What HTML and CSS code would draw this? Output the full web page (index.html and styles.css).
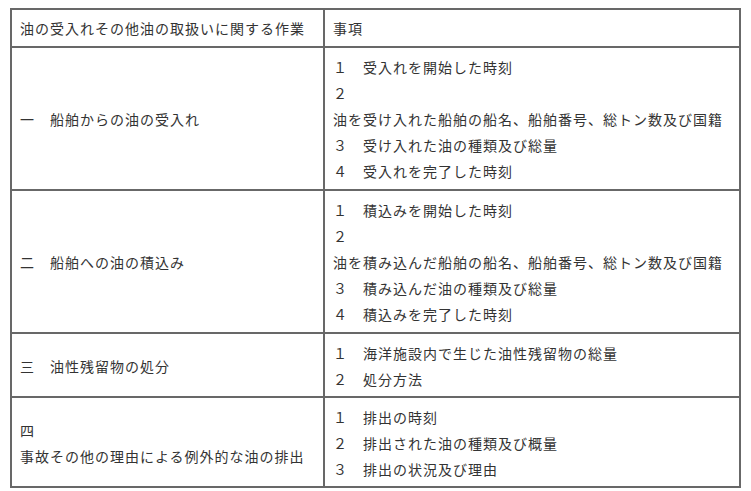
FILE: index.html
```html
<!DOCTYPE html>
<html lang="ja">
<head>
<meta charset="utf-8">
<title>油の取扱いに関する作業</title>
<link rel="stylesheet" href="styles.css">
</head>
<body>
<table class="record">
  <thead>
    <tr>
      <th class="work">油の受入れその他油の取扱いに関する作業</th>
      <th class="items">事項</th>
    </tr>
  </thead>
  <tbody>
    <tr>
      <td class="work"><p class="item"><span class="num">一　</span><span class="txt">船舶からの油の受入れ</span></p></td>
      <td class="items">
        <p class="item"><span class="num">１　</span><span class="txt">受入れを開始した時刻</span></p>
        <p class="item"><span class="num">２　</span><span class="txt">油を受け入れた船舶の船名、船舶番号、総トン数及び国籍</span></p>
        <p class="item"><span class="num">３　</span><span class="txt">受け入れた油の種類及び総量</span></p>
        <p class="item"><span class="num">４　</span><span class="txt">受入れを完了した時刻</span></p>
      </td>
    </tr>
    <tr>
      <td class="work"><p class="item"><span class="num">二　</span><span class="txt">船舶への油の積込み</span></p></td>
      <td class="items">
        <p class="item"><span class="num">１　</span><span class="txt">積込みを開始した時刻</span></p>
        <p class="item"><span class="num">２　</span><span class="txt">油を積み込んだ船舶の船名、船舶番号、総トン数及び国籍</span></p>
        <p class="item"><span class="num">３　</span><span class="txt">積み込んだ油の種類及び総量</span></p>
        <p class="item"><span class="num">４　</span><span class="txt">積込みを完了した時刻</span></p>
      </td>
    </tr>
    <tr class="short">
      <td class="work"><p class="item"><span class="num">三　</span><span class="txt">油性残留物の処分</span></p></td>
      <td class="items">
        <p class="item"><span class="num">１　</span><span class="txt">海洋施設内で生じた油性残留物の総量</span></p>
        <p class="item"><span class="num">２　</span><span class="txt">処分方法</span></p>
      </td>
    </tr>
    <tr class="last">
      <td class="work"><p class="item"><span class="num">四　</span><span class="txt">事故その他の理由による例外的な油の排出</span></p></td>
      <td class="items">
        <p class="item"><span class="num">１　</span><span class="txt">排出の時刻</span></p>
        <p class="item"><span class="num">２　</span><span class="txt">排出された油の種類及び概量</span></p>
        <p class="item"><span class="num">３　</span><span class="txt">排出の状況及び理由</span></p>
      </td>
    </tr>
  </tbody>
</table>
</body>
</html>
```

FILE: styles.css
```css
html, body {
  background: #ffffff;
}
body {
  margin: 8px 10px;
  font-family: "Noto Sans CJK JP", "Noto Sans", sans-serif;
  font-size: 14px;
  letter-spacing: 1px;
  color: #333333;
}
.record {
  width: 731px;
  table-layout: fixed;
  border-collapse: separate;
  border-spacing: 0;
  border-top: 2px solid #686868;
  border-left: 2px solid #686868;
}
.record th,
.record td {
  border-right: 2px solid #686868;
  border-bottom: 2px solid #686868;
  padding: 6px 8px 5px;
  line-height: 26px;
  text-align: left;
  font-weight: normal;
  vertical-align: middle;
}
.record th {
  padding-top: 5px;
  padding-bottom: 5px;
}
.record .work {
  width: 295px;
}
.record td.items {
  vertical-align: top;
}
.item {
  margin: 0;
}
.num,
.txt {
  display: inline-block;
}
.short td {
  padding-bottom: 4px;
}
.last td {
  padding-top: 6px;
  padding-bottom: 4px;
}
```
